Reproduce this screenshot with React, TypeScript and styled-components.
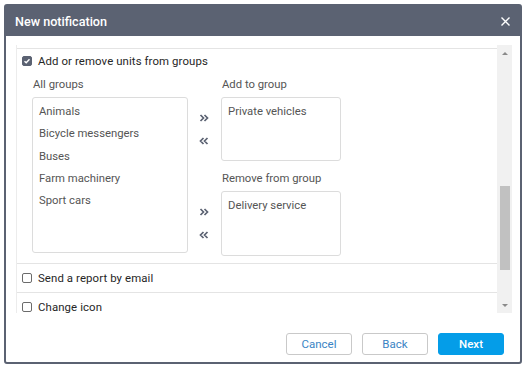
import React from "react";
import styled, { createGlobalStyle } from "styled-components";

const Global = createGlobalStyle`
  html, body {
    margin: 0;
    padding: 0;
    background: #ffffff;
  }
  body {
    font-family: Roboto, "Liberation Sans", Arial, sans-serif;
  }
`;

const Dialog = styled("div")`
  box-sizing: border-box;
  margin: 4px;
  width: 518px;
  height: 360px;
  border: 2px solid #5b6272;
  border-radius: 3px;
  display: flex;
  flex-direction: column;
  background: #ffffff;
`;

const Header = styled("div")`
  height: 30px;
  background: #5b6272;
  display: flex;
  align-items: center;
  justify-content: space-between;
  padding: 0 10px 0 9px;
  color: #ffffff;
  font-size: 12.6px;
  font-weight: 500;
`;

const CloseX = styled("svg")`
  width: 9px;
  height: 9px;
  margin-top: 1px;
`;

const Body = styled("div")`
  padding: 9px 8px 0 10px;
  display: flex;
`;

const ScrollArea = styled("div")`
  flex: 1;
  height: 268px;
  overflow: hidden;
  border-left: 1px solid #ececec;
  padding-top: 3px;
  box-sizing: border-box;
`;

const Section = styled("div")<{ $pad?: string }>`
  border-top: 1px solid #e4e4e4;
  padding: ${(p) => p.$pad || "0 0 0 5px"};
`;

const CheckRow = styled("label")<{ $h?: number }>`
  display: flex;
  align-items: center;
  height: ${(p) => p.$h || 28}px;
  gap: 6px;
  font-size: 11.4px;
  color: #262626;
  font-weight: 400;
  letter-spacing: 0.1px;
`;

const Box = styled("span")<{ $on?: boolean }>`
  box-sizing: border-box;
  width: 10px;
  height: 10px;
  border-radius: 2px;
  border: 1px solid ${(p) => (p.$on ? "#5b6272" : "#6b6b6b")};
  background: ${(p) => (p.$on ? "#5b6272" : "#ffffff")};
  display: flex;
  align-items: center;
  justify-content: center;
`;

const Groups = styled("div")`
  display: grid;
  grid-template-columns: 156px 33px 120px;
  margin: 10px 0 0 10px;
  padding-bottom: 7px;
`;

const Label = styled("div")<{ $top?: number }>`
  font-size: 11.3px;
  line-height: 14px;
  color: #555555;
  margin: ${(p) => p.$top || 0}px 0 5px 1px;
`;

const ListBox = styled("div")<{ $h: number }>`
  box-sizing: border-box;
  height: ${(p) => p.$h}px;
  border: 1px solid #dcdcdc;
  border-radius: 3px;
  padding: 3px 6px;
`;

const Item = styled("div")`
  font-size: 11.3px;
  line-height: 22.3px;
  color: #555555;
`;

const Arrows = styled("div")`
  display: flex;
  flex-direction: column;
  align-items: center;
  justify-content: center;
  gap: 15px;
  padding-right: 2px;
`;

const Scrollbar = styled("div")`
  width: 15px;
  height: 268px;
  background: #f1f1f1;
  display: flex;
  flex-direction: column;
  align-items: center;
`;

const Tri = styled("span")<{ $down?: boolean }>`
  width: 0;
  height: 0;
  border-left: 3px solid transparent;
  border-right: 3px solid transparent;
  ${(p) =>
    p.$down
      ? "border-top: 3px solid #8a8a8a; margin-top: 34px;"
      : "border-bottom: 3px solid #8a8a8a; margin-top: 7px;"}
`;

const Thumb = styled("div")`
  width: 10px;
  height: 84px;
  margin-top: 131px;
  background: #c1c1c1;
`;

const Footer = styled("div")`
  display: flex;
  justify-content: flex-end;
  gap: 10px;
  padding: 20px 16px 0 0;
`;

const Btn = styled("button")<{ $primary?: boolean }>`
  box-sizing: border-box;
  width: 66px;
  height: 22px;
  border-radius: 3px;
  font-family: Roboto, "Liberation Sans", Arial, sans-serif;
  font-size: 11.5px;
  font-weight: ${(p) => (p.$primary ? 500 : 400)};
  cursor: pointer;
  border: 1px solid ${(p) => (p.$primary ? "#049de8" : "#c9c9c9")};
  background: ${(p) => (p.$primary ? "#049de8" : "#ffffff")};
  color: ${(p) => (p.$primary ? "#ffffff" : "#3a84c4")};
`;

function Check({ on }: { on?: boolean }) {
  return (
    <Box $on={on}>
      {on ? (
        <svg width="8" height="8" viewBox="0 0 8 8">
          <path d="M1.5 4.2 L3.2 5.8 L6.5 2.2" stroke="#fff" strokeWidth="1.4" fill="none" />
        </svg>
      ) : null}
    </Box>
  );
}

function Chevrons({ left }: { left?: boolean }) {
  const d = left
    ? "M4.5 1 L1.5 4 L4.5 7 M8.5 1 L5.5 4 L8.5 7"
    : "M1.5 1 L4.5 4 L1.5 7 M5.5 1 L8.5 4 L5.5 7";
  return (
    <svg width="10" height="8" viewBox="0 0 10 8">
      <path d={d} stroke="#5b6272" strokeWidth="1.7" fill="none" />
    </svg>
  );
}

const allGroups = ["Animals", "Bicycle messengers", "Buses", "Farm machinery", "Sport cars"];

export default function App() {
  return (
    <>
      <Global />
      <Dialog>
        <Header>
          <span>New notification</span>
          <CloseX viewBox="0 0 9 9">
            <path d="M0.5 0.5 L8.5 8.5 M8.5 0.5 L0.5 8.5" stroke="#fff" strokeWidth="1.4" />
          </CloseX>
        </Header>
        <Body>
          <ScrollArea>
            <Section $pad="5px 0 0 5px">
              <CheckRow $h={14}>
                <Check on />
                Add or remove units from groups
              </CheckRow>
              <Groups>
                <Label>All groups</Label>
                <div />
                <Label>Add to group</Label>

                <ListBox $h={156} style={{ gridRow: "2 / span 3", alignSelf: "start" }}>
                  {allGroups.map((g) => (
                    <Item key={g}>{g}</Item>
                  ))}
                </ListBox>
                <Arrows>
                  <Chevrons />
                  <Chevrons left />
                </Arrows>
                <ListBox $h={64}>
                  <Item>Private vehicles</Item>
                </ListBox>

                <div />
                <Label $top={11}>Remove from group</Label>

                <Arrows>
                  <Chevrons />
                  <Chevrons left />
                </Arrows>
                <ListBox $h={65}>
                  <Item>Delivery service</Item>
                </ListBox>
              </Groups>
            </Section>
            <Section>
              <CheckRow>
                <Check />
                Send a report by email
              </CheckRow>
            </Section>
            <Section>
              <CheckRow>
                <Check />
                Change icon
              </CheckRow>
            </Section>
          </ScrollArea>
          <Scrollbar>
            <Tri />
            <Thumb />
            <Tri $down />
          </Scrollbar>
        </Body>
        <Footer>
          <Btn>Cancel</Btn>
          <Btn>Back</Btn>
          <Btn $primary>Next</Btn>
        </Footer>
      </Dialog>
    </>
  );
}
